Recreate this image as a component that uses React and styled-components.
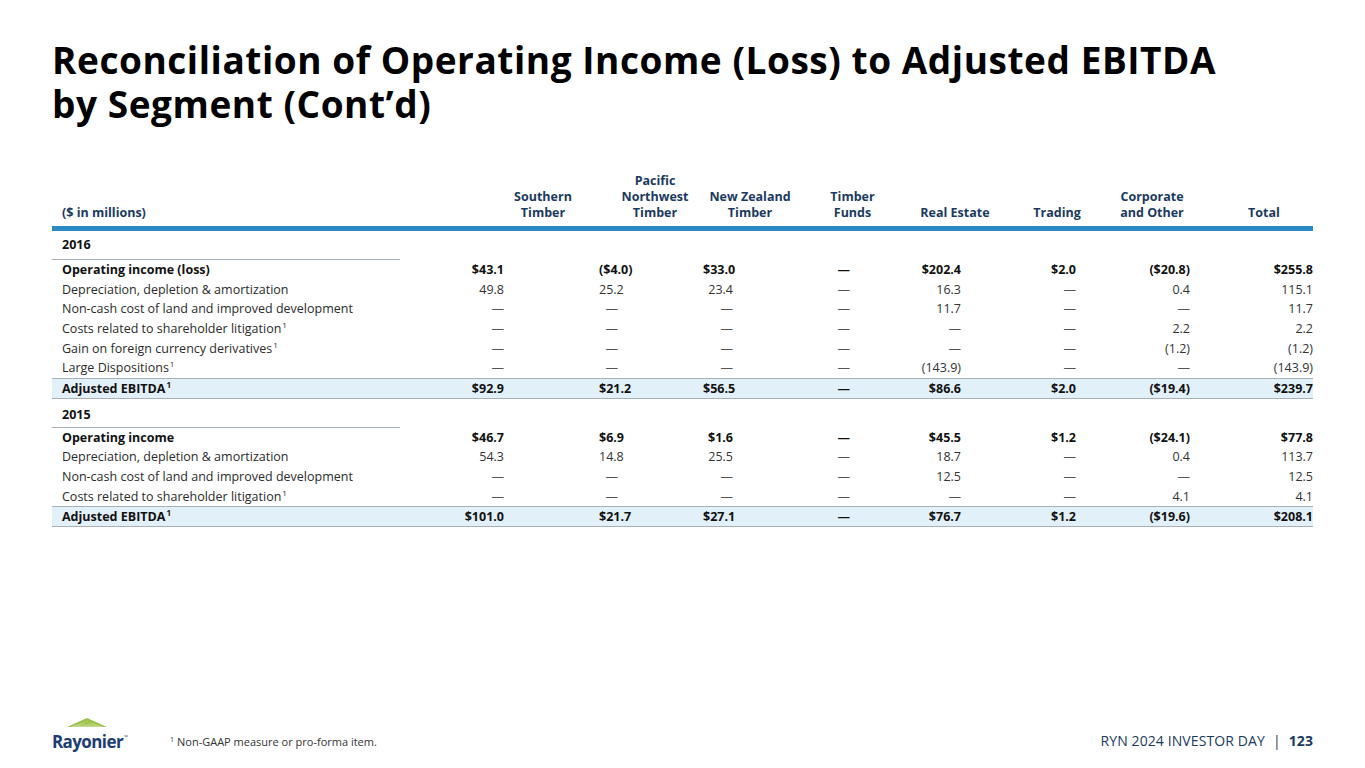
import React from "react";
import styled, { createGlobalStyle } from "styled-components";

const GlobalStyle = createGlobalStyle`
  html, body {
    margin: 0;
    padding: 0;
    background: #ffffff;
  }
  body {
    font-family: "Open Sans", "Noto Sans", "Liberation Sans", sans-serif;
  }
`;

const NAVY = "#1b3a60";
const COLS = "348px 199px 104px 98px 103px 102px 99px 103px 105px";

// header offset (hpl/hpr) and number right padding per data column
const columns = [
  { label: ["Southern", "Timber"], hpl: 87, hpr: 0, pr: 95 },
  { label: ["Pacific", "Northwest", "Timber"], hpl: 8, hpr: 0, pr: 85 },
  { label: ["New Zealand", "Timber"], hpl: 0, hpr: 4, pr: 68 },
  { label: ["Timber", "Funds"], hpl: 0, hpr: 0, pr: 54 },
  { label: ["Real Estate"], hpl: 0, hpr: 0, pr: 45 },
  { label: ["Trading"], hpl: 3, hpr: 0, pr: 29 },
  { label: ["Corporate", "and Other"], hpl: 0, hpr: 9, pr: 18 },
  { label: ["Total"], hpl: 7, hpr: 0, pr: 0 },
];

const D = "—";

const sections = [
  {
    year: "2016",
    rows: [
      { label: "Operating income (loss)", bold: true, values: ["$43.1", "($4.0)", "$33.0", D, "$202.4", "$2.0", "($20.8)", "$255.8"] },
      { label: "Depreciation, depletion & amortization", values: ["49.8", "25.2", "23.4", D, "16.3", D, "0.4", "115.1"] },
      { label: "Non-cash cost of land and improved development", values: [D, D, D, D, "11.7", D, D, "11.7"] },
      { label: "Costs related to shareholder litigation", sup: true, values: [D, D, D, D, D, D, "2.2", "2.2"] },
      { label: "Gain on foreign currency derivatives", sup: true, values: [D, D, D, D, D, D, "(1.2)", "(1.2)"] },
      { label: "Large Dispositions", sup: true, values: [D, D, D, D, "(143.9)", D, D, "(143.9)"] },
      { label: "Adjusted EBITDA", sup: true, bold: true, total: true, values: ["$92.9", "$21.2", "$56.5", D, "$86.6", "$2.0", "($19.4)", "$239.7"] },
    ],
  },
  {
    year: "2015",
    rows: [
      { label: "Operating income", bold: true, values: ["$46.7", "$6.9", "$1.6", D, "$45.5", "$1.2", "($24.1)", "$77.8"] },
      { label: "Depreciation, depletion & amortization", values: ["54.3", "14.8", "25.5", D, "18.7", D, "0.4", "113.7"] },
      { label: "Non-cash cost of land and improved development", values: [D, D, D, D, "12.5", D, D, "12.5"] },
      { label: "Costs related to shareholder litigation", sup: true, values: [D, D, D, D, D, D, "4.1", "4.1"] },
      { label: "Adjusted EBITDA", sup: true, bold: true, total: true, values: ["$101.0", "$21.7", "$27.1", D, "$76.7", "$1.2", "($19.6)", "$208.1"] },
    ],
  },
];

const Page = styled.div`
  width: 1365px;
  height: 768px;
  box-sizing: border-box;
  padding: 38px 52px 0 52px;
  display: flex;
  flex-direction: column;
  overflow: hidden;
`;

const Title = styled.h1`
  margin: 0;
  font-family: "Open Sans", "Noto Sans", sans-serif;
  font-weight: 700;
  font-size: 37px;
  line-height: 44px;
  letter-spacing: 0.55px;
  color: #000000;
`;

const Table = styled.div`
  margin-top: 47px;
  width: 1261px;
  display: flex;
  flex-direction: column;
`;

const HeaderRow = styled.div`
  display: grid;
  grid-template-columns: ${COLS};
  align-items: end;
  border-bottom: 5px solid #2a8bc4;
  padding-bottom: 5px;
`;

const HeadCell = styled.div`
  font-size: 12.5px;
  font-weight: 700;
  line-height: 16px;
  color: ${NAVY};
  text-align: ${({ $left }) => ($left ? "left" : "center")};
  padding-left: ${({ $pl }) => $pl}px;
  padding-right: ${({ $pr }) => $pr}px;
`;

const YearRow = styled.div`
  display: grid;
  grid-template-columns: ${COLS};
  height: 29px;
`;

const YearCell = styled.div`
  box-sizing: border-box;
  padding: ${({ $top }) => $top}px 0 0 10px;
  border-bottom: 1px solid #a7afb7;
  font-size: 12.5px;
  font-weight: 700;
  color: #111111;
`;

const Row = styled.div`
  display: grid;
  grid-template-columns: ${COLS};
  height: ${({ $total }) => ($total ? "19px" : "19.6px")};
  align-items: center;
  background: ${({ $total }) => ($total ? "#e2f0f9" : "transparent")};
  border-top: ${({ $total }) => ($total ? "1px solid #a7afb7" : "none")};
  border-bottom: ${({ $total }) => ($total ? "1px solid #a7afb7" : "none")};
`;

const LabelCell = styled.div`
  padding-left: 10px;
  font-size: 12.5px;
  font-weight: ${({ $bold }) => ($bold ? 700 : 400)};
  color: ${({ $bold }) => ($bold ? "#111111" : "#2b2b2b")};
  white-space: nowrap;
`;

const Sup = styled.sup`
  font-size: 8px;
  line-height: 0;
  vertical-align: 5px;
  margin-left: 1px;
`;

const NumCell = styled.div`
  text-align: right;
  padding-right: ${({ $pr }) => $pr}px;
  font-size: 12.5px;
  font-weight: ${({ $bold }) => ($bold ? 700 : 400)};
  color: ${({ $bold, $dash }) => ($bold ? "#111111" : $dash ? "#555555" : "#333333")};
  white-space: nowrap;
`;

const Footer = styled.div`
  margin-top: auto;
  height: 48px;
  display: flex;
  align-items: center;
  padding-bottom: 10px;
`;

const Logo = styled.div`
  width: 118px;
  display: flex;
  flex-direction: column;
  align-items: flex-start;
  svg {
    margin-left: 15px;
    display: block;
  }
`;

const LogoText = styled.div`
  font-family: "Open Sans", "Liberation Sans", sans-serif;
  font-weight: 700;
  font-size: 17px;
  line-height: 18px;
  letter-spacing: -0.6px;
  color: #203d73;
  span {
    font-size: 5px;
    vertical-align: 9px;
    font-weight: 400;
    margin-left: 1px;
  }
`;

const Footnote = styled.div`
  font-size: 11px;
  color: #333333;
  padding-top: 14px;
  sup {
    font-size: 7px;
    vertical-align: 4px;
    margin-right: 3px;
  }
`;

const PageTag = styled.div`
  margin-left: auto;
  padding-top: 12px;
  font-size: 14px;
  color: ${NAVY};
  letter-spacing: 0.1px;
  b {
    font-weight: 700;
  }
  .sep {
    margin: 0 8px;
  }
`;

export default function App() {
  return (
    <>
      <GlobalStyle />
      <Page>
        <Title>
          Reconciliation of Operating Income (Loss) to Adjusted EBITDA
          <br />
          by Segment (Cont’d)
        </Title>
        <Table>
          <HeaderRow>
            <HeadCell $left $pl={10} $pr={0}>($ in millions)</HeadCell>
            {columns.map((c, i) => (
              <HeadCell key={i} $pl={c.hpl} $pr={c.hpr}>
                {c.label.map((l, j) => (
                  <div key={j}>{l}</div>
                ))}
              </HeadCell>
            ))}
          </HeaderRow>
          {sections.map((s, si) => (
            <React.Fragment key={s.year}>
              <YearRow>
                <YearCell $top={si === 0 ? 5 : 7}>{s.year}</YearCell>
              </YearRow>
              {s.rows.map((r, i) => (
                <Row key={i} $total={r.total}>
                  <LabelCell $bold={r.bold}>
                    {r.label}
                    {r.sup && <Sup>1</Sup>}
                  </LabelCell>
                  {r.values.map((v, j) => (
                    <NumCell key={j} $pr={columns[j].pr} $bold={r.bold} $dash={v === D}>
                      {v}
                    </NumCell>
                  ))}
                </Row>
              ))}
            </React.Fragment>
          ))}
        </Table>
        <Footer>
          <Logo>
            <svg width="40" height="10" viewBox="0 0 40 10">
              <defs>
                <linearGradient id="roof" x1="0" y1="0" x2="0" y2="1">
                  <stop offset="0" stopColor="#8dbb3f" />
                  <stop offset="1" stopColor="#c7dc8c" />
                </linearGradient>
              </defs>
              <polygon points="20,0 40,9 36,9 20,3.5 4,9 0,9" fill="#9cc24c" />
              <polygon points="20,3.5 36,9 4,9" fill="url(#roof)" />
            </svg>
            <LogoText>
              Rayonier<span>™</span>
            </LogoText>
          </Logo>
          <Footnote>
            <sup>1</sup>Non-GAAP measure or pro-forma item.
          </Footnote>
          <PageTag>
            RYN 2024 INVESTOR DAY<span className="sep">|</span>
            <b>123</b>
          </PageTag>
        </Footer>
      </Page>
    </>
  );
}
